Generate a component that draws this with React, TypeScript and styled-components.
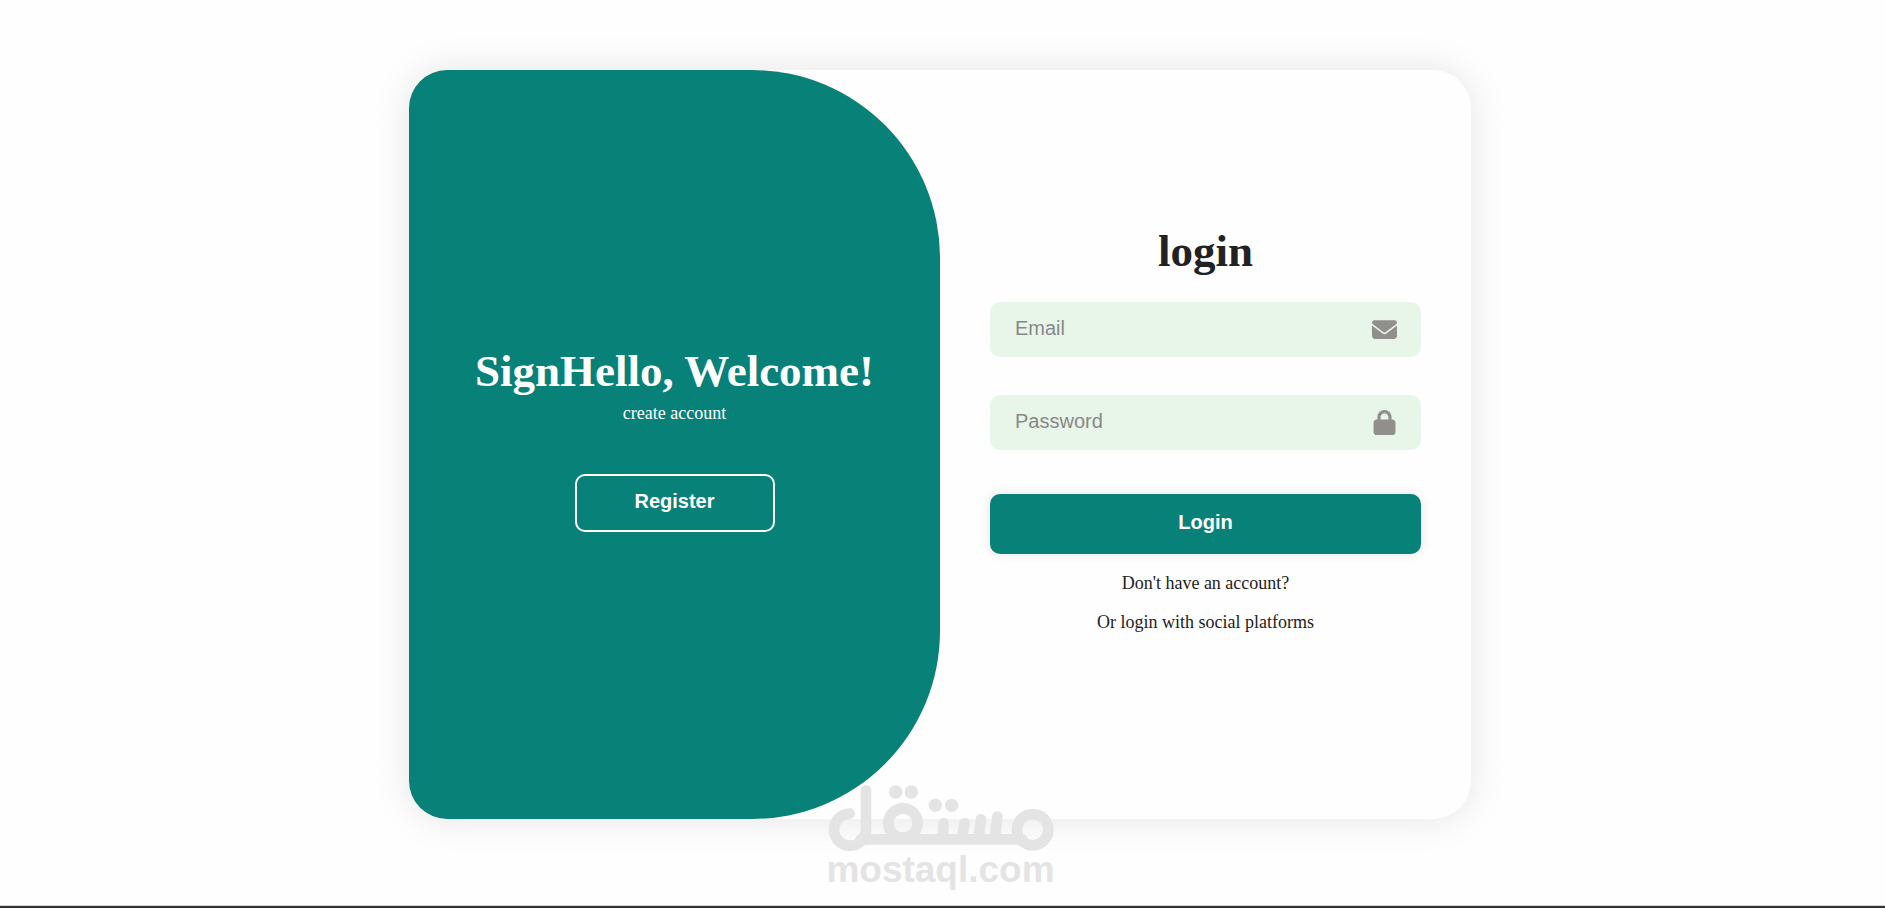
import React from "react";
import styled, { createGlobalStyle } from "styled-components";
import { FaEnvelope, FaLock } from "react-icons/fa6";

const GlobalStyle = createGlobalStyle`
  *, *::before, *::after { box-sizing: border-box; }
  body {
    margin: 0;
    background: #fefefe;
    color: #222;
    font-family: "Liberation Serif", "Times New Roman", serif;
  }
  h1, p { margin: 0; }
`;

const Page = styled.div`
  position: relative;
  display: flex;
  flex-direction: column;
  min-height: 100vh;
`;

const Main = styled.main`
  flex: 1;
  display: flex;
  justify-content: center;
  align-items: flex-start;
  padding: 70px 5px 70px 0;
`;

const Card = styled.div`
  display: grid;
  grid-template-columns: 1fr 1fr;
  width: 100%;
  max-width: 1062px;
  min-height: 749px;
  border-radius: 38px;
  background: #fefefe;
  box-shadow: 0 0 38px rgba(0, 0, 0, 0.1);
  overflow: hidden;
`;

const Welcome = styled.section`
  display: flex;
  flex-direction: column;
  align-items: center;
  justify-content: center;
  padding-bottom: 12px;
  border-radius: 0 188px 188px 0;
  background: #088178;
  color: #fff;
`;

const LoginForm = styled.form`
  display: flex;
  flex-direction: column;
  justify-content: center;
  padding: 0 50px 30px;
  text-align: center;
`;

const Title = styled.h1`
  font-size: 45px;
  line-height: 50px;
  font-weight: 700;
`;

const Note = styled.p<{ $gap: number }>`
  margin-top: ${({ $gap }) => $gap}px;
  font-size: 18px;
  line-height: 21px;
`;

const Field = styled.label`
  display: flex;
  align-items: center;
  height: 55px;
  padding: 0 24px 0 25px;
  border-radius: 10px;
  background: #e8f5e9;
  color: #918f8b;
  font-size: 25px;

  ${Title} + & { margin-top: 26px; }
  & + & { margin-top: 38px; }
`;

const TextInput = styled.input`
  flex: 1;
  min-width: 0;
  padding: 0 0 2px;
  border: 0;
  outline: 0;
  background: transparent;
  color: #222;
  font-family: "Liberation Sans", Arial, sans-serif;
  font-size: 20px;

  &::placeholder { color: #888; opacity: 1; }
`;

const Button = styled.button`
  padding: 0 0 3px;
  border: 0;
  border-radius: 10px;
  color: #fff;
  font-family: "Liberation Sans", Arial, sans-serif;
  font-size: 20px;
  font-weight: 700;
  cursor: pointer;
`;

const LoginButton = styled(Button)`
  height: 60px;
  margin-top: 44px;
  background: #088178;
  box-shadow: 0 0 12px rgba(0, 0, 0, 0.1);
`;

const RegisterButton = styled(Button)`
  width: 200px;
  height: 58px;
  margin-top: 50px;
  border: 2px solid #fff;
  background: transparent;
`;

const Footer = styled.footer`
  height: 3px;
  border-top: 1px solid #d5d5d9;
  background: #333335;
`;

const Watermark = styled.div`
  position: absolute;
  left: 0;
  right: 4px;
  bottom: 19px;
  display: flex;
  flex-direction: column;
  align-items: center;
  color: #e4e4e4;
  font-family: "Liberation Sans", Arial, sans-serif;
  font-size: 37px;
  line-height: 38px;
  font-weight: 700;
  pointer-events: none;
`;

const MostaqlLogo = () => (
  <svg width="226" height="66" viewBox="87 48 678 198" fill="none" stroke="currentColor" strokeWidth="32" strokeLinecap="round" aria-hidden="true">
    <path d="M152 134A48 48 0 1 0 201 182V64" />
    <path d="M185 211H670" />
    <circle cx="312" cy="162" r="44" />
    <circle cx="701" cy="182" r="47" />
    <path d="M434 163L431 205M497 163L489 205M546 151L539 205M595 143L588 205" />
    <g fill="currentColor" stroke="none">
      <circle cx="290" cy="69" r="20" />
      <circle cx="337" cy="69" r="20" />
      <circle cx="409" cy="109" r="20" />
      <circle cx="458" cy="109" r="20" />
    </g>
  </svg>
);

export default function App() {
  return (
    <Page>
      <GlobalStyle />
      <Main>
        <Card>
          <Welcome>
            <Title>SignHello, Welcome!</Title>
            <Note $gap={7}>create account</Note>
            <RegisterButton type="button">Register</RegisterButton>
          </Welcome>
          <LoginForm onSubmit={(event) => event.preventDefault()}>
            <Title>login</Title>
            <Field>
              <TextInput type="email" placeholder="Email" aria-label="Email" />
              <FaEnvelope aria-hidden="true" />
            </Field>
            <Field>
              <TextInput type="password" placeholder="Password" aria-label="Password" />
              <FaLock aria-hidden="true" />
            </Field>
            <LoginButton type="submit">Login</LoginButton>
            <Note $gap={19}>Don't have an account?</Note>
            <Note $gap={18}>Or login with social platforms</Note>
          </LoginForm>
        </Card>
      </Main>
      <Footer />
      <Watermark>
        <MostaqlLogo />
        <span>mostaql.com</span>
      </Watermark>
    </Page>
  );
}
